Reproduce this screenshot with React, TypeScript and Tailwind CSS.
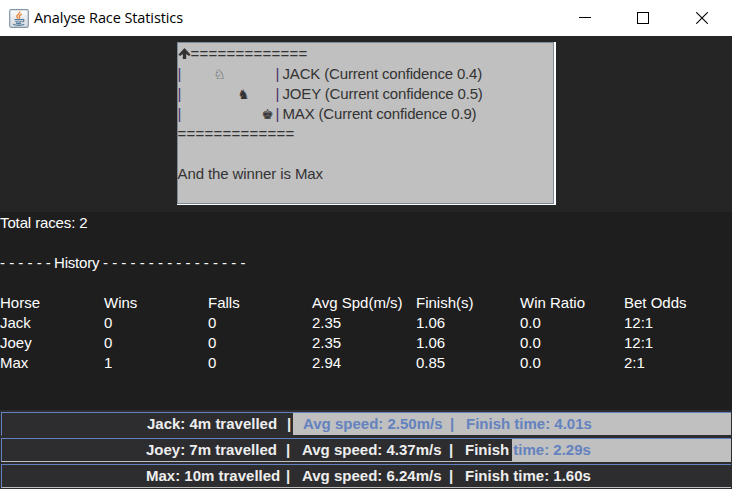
import React from "react";

const columns = [
  { width: "w-[104px]", cells: ["Horse", "Jack", "Joey", "Max"] },
  { width: "w-[104px]", cells: ["Wins", "0", "0", "1"] },
  { width: "w-[104px]", cells: ["Falls", "0", "0", "0"] },
  { width: "w-[104px]", cells: ["Avg Spd(m/s)", "2.35", "2.35", "2.94"] },
  { width: "w-[104px]", cells: ["Finish(s)", "1.06", "1.06", "0.85"] },
  { width: "w-[104px]", cells: ["Win Ratio", "0.0", "0.0", "0.0"] },
  { width: "w-[108px]", cells: ["Bet Odds", "12:1", "12:1", "2:1"] },
];

function TitleBar() {
  return (
    <header className="flex h-9 items-center bg-white pl-[9px] font-['Open_Sans',sans-serif] text-black">
      <svg width="20" height="19" viewBox="0 0 20 19" className="shrink-0">
        <defs>
          <linearGradient id="tile" x1="0" y1="0" x2="0" y2="1">
            <stop offset="0" stopColor="#fbfbfb" />
            <stop offset="1" stopColor="#d5dade" />
          </linearGradient>
        </defs>
        <rect x="0.7" y="0.7" width="18.6" height="17.6" rx="1.5" fill="url(#tile)" stroke="#8296a8" strokeWidth="1.2" />
        <path d="M10.5 2.5c1.5 2-3.2 3-2.7 5 .2.9 1.2 1.4 1.5 2.2M12.8 5.2c-2 .9-3 1.7-2.3 2.8.5.6.5 1-.2 1.6" fill="none" stroke="#e8853a" strokeWidth="1.3" />
        <path d="M5.5 10.6h7.5M6.3 12.5c2 .6 4.500.6 6.300 0M7 14.200c1.500.5 3.800.5 5 0M13 10.600c2.600-.8 2.600 1.700.3 2.200M4.200 15.300c2 1.300 9 1.300 11 0" fill="none" stroke="#55799a" strokeWidth="1.2" />
      </svg>
      <h1 className="ml-[5px] flex-1 whitespace-nowrap text-[14.5px] leading-5 tracking-[-0.1px]">Analyse Race Statistics</h1>
      <div className="flex w-[163px] items-center gap-[46px] pl-[10px]">
        <svg width="12" height="12" viewBox="0 0 12 12" shapeRendering="crispEdges"><path d="M0 5.500h12" stroke="#000" /></svg>
        <svg width="12" height="12" viewBox="0 0 12 12" shapeRendering="crispEdges"><path d="M.5.5h11v11H.5z" fill="none" stroke="#000" /></svg>
        <svg width="12" height="12" viewBox="0 0 12 12" className="ml-[1px]"><path d="M.3.3l11.400 11.400M11.700.3L.3 11.700" stroke="#000" strokeWidth="1.100" /></svg>
      </div>
    </header>
  );
}

function Lane({ piece, before, label, spacing }: { piece: string; before: string; label: string; spacing: string }) {
  return (
    <div className="flex h-5">
      <div className="flex w-[98px]">
        <span className="w-1 text-[#46306a]">|</span>
        <span className={`${before} font-['DejaVu_Sans',sans-serif] text-[13.5px]`}>{piece}</span>
      </div>
      <span className="w-[7px] text-[#46306a]">|</span>
      <span className={spacing}>{label}</span>
    </div>
  );
}

function RacePanel() {
  return (
    <div className="h-[163px] w-[379px] border-r-2 border-b border-white bg-[#c0c0c0]">
      <div className="h-full border border-[#7a8a99] text-[#333] whitespace-pre pt-px">
        <div className="flex h-5">
          <svg width="13" height="20" viewBox="0 0 13 20"><path d="M6.500 4L12.600 10.700L11 12L8.200 10V15H4.800V10L2 12L.4 10.700Z" fill="#333" /></svg>
          <span className="tracking-[0.24px]">=============</span>
        </div>
        <Lane piece="♘" before="pl-[32px]" label="JACK (Current confidence 0.4)" spacing="tracking-[-0.16px]" />
        <Lane piece="♞" before="pl-[56px]" label="JOEY (Current confidence 0.5)" spacing="tracking-[-0.16px]" />
        <Lane piece="♚" before="pl-[80px]" label="MAX (Current confidence 0.9)" spacing="tracking-[-0.16px]" />
        <div className="tracking-[0.24px]">=============</div>
        <div className="h-5" />
        <div className="tracking-[-0.1px]">And the winner is Max</div>
      </div>
    </div>
  );
}

function BarText({ parts, start, color }: { parts: string[]; start: string; color: string }) {
  return (
    <div className={`flex w-[728px] whitespace-pre font-bold leading-[22px] ${start} ${color}`}>
      <span className="w-[140px]">{parts[0]}</span>
      <span className="w-[16px]">|</span>
      <span className="w-[147px]">{parts[1]}</span>
      <span className="w-[16px]">|</span>
      <span>{parts[2]}</span>
    </div>
  );
}

function Bar({ parts, start, done, bottom }: { parts: string[]; start: string; done: string; bottom: string }) {
  return (
    <div className={`relative ml-px h-6 w-[730px] overflow-hidden border-t border-l border-b border-[#6382bf] bg-[#2d2d30] ${bottom}`}>
      <BarText parts={parts} start={start} color="text-[#eeeeee]" />
      <div className={`absolute -top-px bottom-0 right-0 overflow-hidden border-t border-[#b8cfe5] bg-[#c0c0c0] ${done}`}>
        <div className="flex justify-end">
          <div className="w-[729px] shrink-0">
            <BarText parts={parts} start={start} color="text-[#6382bf]" />
          </div>
        </div>
      </div>
    </div>
  );
}

export default function App() {
  return (
    <div className="h-[489px] w-[732px] overflow-hidden bg-[#1e1e1e] font-['Liberation_Sans',Arial,sans-serif] text-[15px] leading-5 text-white">
      <TitleBar />
      <section className="flex h-44 justify-center bg-[#252525] pt-1.5">
        <RacePanel />
      </section>
      <section className="h-[198px] whitespace-pre pt-px">
        <div className="tracking-[-0.12px]">Total races: 2</div>
        <div className="h-5" />
        <div className="flex">
          <span className="w-[54px]">- - - - - -</span>
          <span className="w-[49px] tracking-[-0.2px]">History</span>
          <span>- - - - - - - - - - - - - - - -</span>
        </div>
        <div className="h-5" />
        <div className="flex">
          {columns.map((c) => (
            <div key={c.cells[0]} className={c.width}>
              {c.cells.map((v, i) => <div key={i}>{v}</div>)}
            </div>
          ))}
        </div>
      </section>
      <section className="flex h-[79px] flex-col gap-0.5 bg-[#2d2d30] pt-0.5">
        <Bar parts={["Jack: 4m travelled", "Avg speed: 2.50m/s", "Finish time: 4.01s"]} start="pl-[145px]" done="w-[438px]" bottom="border-b-[#2d2d30]" />
        <Bar parts={["Joey: 7m travelled", "Avg speed: 4.37m/s", "Finish time: 2.29s"]} start="pl-[144px]" done="w-[219px]" bottom="border-b-[#c0c0c0]" />
        <Bar parts={["Max: 10m travelled", "Avg speed: 6.24m/s", "Finish time: 1.60s"]} start="pl-[144px]" done="hidden" bottom="border-b-[#c0c0c0]" />
      </section>
    </div>
  );
}
